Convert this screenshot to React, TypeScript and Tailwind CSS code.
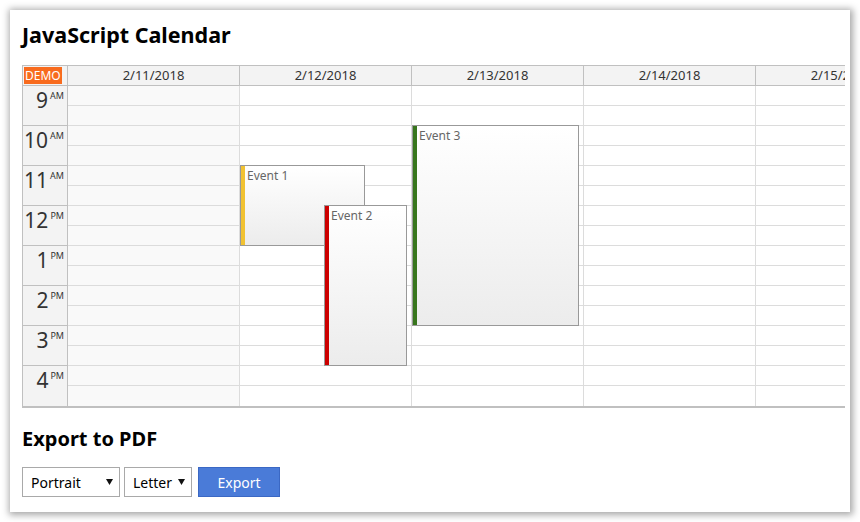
import React from "react";

const days = ["2/11/2018", "2/12/2018", "2/13/2018", "2/14/2018", "2/15/2018"];
const hours = [
  ["9", "AM"],
  ["10", "AM"],
  ["11", "AM"],
  ["12", "PM"],
  ["1", "PM"],
  ["2", "PM"],
  ["3", "PM"],
  ["4", "PM"],
];

type Ev = { text: string; day: number; top: number; height: number; left: number; width: number; bar: string };

const events: Ev[] = [
  { text: "Event 1", day: 1, top: 80, height: 80, left: 0, width: 125, bar: "bg-[#f1c232]" },
  { text: "Event 2", day: 1, top: 120, height: 160, left: 84, width: 83, bar: "bg-[#cc0000]" },
  { text: "Event 3", day: 2, top: 40, height: 200, left: 0, width: 167, bar: "bg-[#38761d]" },
];

function EventBox({ ev }: { ev: Ev }) {
  return (
    <div
      className="absolute z-10 overflow-hidden border border-[#999] bg-gradient-to-b from-[#fff] to-[#ececec]"
      style={{ top: ev.top - 1, height: ev.height + 1, left: ev.left, width: ev.width }}
    >
      <div className={`absolute left-0 top-0 bottom-0 w-[4px] ${ev.bar}`} />
      <div className="pl-[6px] pt-[2px] text-[12px] leading-[16px] text-[#666]">{ev.text}</div>
    </div>
  );
}

function Calendar() {
  return (
    <div className="w-[823px] overflow-hidden border-l border-t border-b-2 border-[#c0c0c0] text-[#333]">
      <div className="flex h-[20px] w-max bg-[#f3f3f3]">
        <div className="flex w-[45px] shrink-0 items-center border-r border-b border-[#c0c0c0] pl-[1px]">
          <span className="bg-[#f86b1e] px-[1px] text-[12px] leading-[17px] text-white">DEMO</span>
        </div>
        {days.map((d) => (
          <div
            key={d}
            className="w-[172px] shrink-0 border-r border-b border-[#c0c0c0] text-center text-[13px] leading-[19px]"
          >
            {d}
          </div>
        ))}
      </div>
      <div className="flex w-max">
        <div className="w-[45px] shrink-0 bg-[#f3f3f3]">
          {hours.map(([h, ap], i) => (
            <div
              key={h}
              className={`flex h-[40px] justify-end border-r border-[#c0c0c0] pr-[3px] ${i < hours.length - 1 ? "border-b" : ""}`}
            >
              <span className="text-[21px] leading-[28px]">{h}</span>
              <span className="ml-[2px] pt-[4px] text-[9px] leading-[12px]">{ap}</span>
            </div>
          ))}
        </div>
        {days.map((d, di) => (
          <div
            key={d}
            className={`relative w-[172px] shrink-0 border-r border-[#dcdcdc] ${di === 0 ? "bg-[#f9f9f9]" : "bg-white"}`}
          >
            {Array.from({ length: 16 }).map((_, i) => (
              <div key={i} className={`h-[20px] ${i < 15 ? "border-b border-[#dcdcdc]" : ""}`} />
            ))}
            {events
              .filter((e) => e.day === di)
              .map((e) => (
                <EventBox key={e.text} ev={e} />
              ))}
          </div>
        ))}
      </div>
    </div>
  );
}

function Select({ value, options, width }: { value: string; options: string[]; width: string }) {
  return (
    <div className={`relative ${width}`}>
      <select
        defaultValue={value}
        className="h-[30px] w-full appearance-none border border-[#a9a9a9] bg-white pl-[8px] text-[14px] text-black outline-none"
      >
        {options.map((o) => (
          <option key={o}>{o}</option>
        ))}
      </select>
      <svg className="pointer-events-none absolute right-[7px] top-[12px]" width="7" height="6" viewBox="0 0 7 6">
        <path d="M0 0h7L3.5 6z" fill="#111" />
      </svg>
    </div>
  );
}

export default function App() {
  return (
    <div className="min-h-[522px] w-[860px] bg-white p-[10px]" style={{ fontFamily: '"Noto Sans", "Open Sans", sans-serif' }}>
      <div className="h-[502px] w-[840px] bg-white px-[12px] pt-[12px] shadow-[1px_1px_7px_2px_rgba(0,0,0,0.35)]">
        <h1 className="h-[43px] text-[21.5px] font-bold leading-[26px] text-black">JavaScript Calendar</h1>
        <Calendar />
        <h2 className="mt-[17px] text-[20px] font-bold leading-[28px] text-black">Export to PDF</h2>
        <div className="mt-[14px] flex items-center gap-[4px]">
          <Select value="Portrait" options={["Portrait", "Landscape"]} width="w-[98px]" />
          <Select value="Letter" options={["Letter", "A4"]} width="w-[68px]" />
          <button className="ml-[2px] h-[30px] w-[82px] border border-[#3b68c4] bg-[#4a7bd8] text-[14px] text-white">
            Export
          </button>
        </div>
      </div>
    </div>
  );
}
